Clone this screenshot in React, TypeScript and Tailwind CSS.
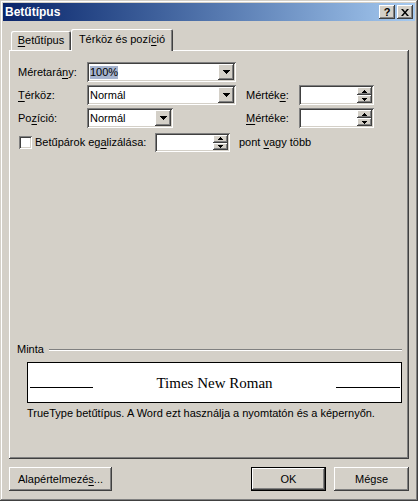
import React from "react";

const raised =
  "shadow-[inset_-1px_-1px_#404040,inset_1px_1px_#ffffff,inset_-2px_-2px_#808080,inset_2px_2px_#d4d0c8]";
const sunken =
  "shadow-[inset_1px_1px_#808080,inset_-1px_-1px_#ffffff,inset_2px_2px_#404040,inset_-2px_-2px_#d4d0c8]";

const U = ({ children }: { children: React.ReactNode }) => (
  <span className="underline underline-offset-[2px] decoration-1">{children}</span>
);

const DownArrow = () => (
  <svg width="7" height="4" viewBox="0 0 7 4">
    <path d="M0 0h7L3.5 4z" fill="#000" shapeRendering="crispEdges" />
  </svg>
);

const Combo = ({
  width,
  value,
  selected,
}: {
  width: string;
  value: string;
  selected?: boolean;
}) => (
  <div className={`${sunken} ${width} bg-white h-[20px] flex p-[2px]`}>
    <div className="flex-1 flex items-center pl-[1px]">
      <span className={selected ? "bg-[#a6b4cf] leading-[13px]" : "leading-[13px]"}>{value}</span>
    </div>
    <div className={`${raised} bg-[#d4d0c8] w-[16px] h-full flex items-center justify-center`}>
      <DownArrow />
    </div>
  </div>
);

const SpinArrow = ({ up }: { up?: boolean }) => (
  <svg width="5" height="3" viewBox="0 0 5 3">
    <path d={up ? "M2.5 0L5 3H0z" : "M0 0h5L2.5 3z"} fill="#000" shapeRendering="crispEdges" />
  </svg>
);

const Spin = ({ width, height }: { width: string; height: string }) => (
  <div className={`${sunken} ${width} ${height} bg-white flex p-[2px]`}>
    <div className="flex-1" />
    <div className="w-[15px] h-full flex flex-col">
      <div className={`${raised} bg-[#d4d0c8] flex-1 flex items-center justify-center`}>
        <SpinArrow up />
      </div>
      <div className={`${raised} bg-[#d4d0c8] flex-1 flex items-center justify-center`}>
        <SpinArrow />
      </div>
    </div>
  </div>
);

export default function App() {
  return (
    <div className="w-[418px] h-[501px] bg-[#d4d0c8] text-[11px] leading-[13px] text-black font-['Liberation_Sans',Arial,sans-serif] shadow-[inset_-1px_-1px_#404040,inset_1px_1px_#d4d0c8,inset_-2px_-2px_#808080,inset_2px_2px_#ffffff] p-[3px] flex flex-col">
      {/* Title bar */}
      <div className="h-[18px] shrink-0 bg-gradient-to-r from-[#0a246a] to-[#a6caf0] flex items-center pl-[2px] pr-[2px]">
        <span className="text-white font-bold text-[12px] flex-1">Betűtípus</span>
        <div className={`${raised} bg-[#d4d0c8] w-[16px] h-[14px] flex items-center justify-center font-bold text-[11px] leading-none`}>
          ?
        </div>
        <div className={`${raised} bg-[#d4d0c8] w-[16px] h-[14px] ml-[2px] flex items-center justify-center`}>
          <svg width="8" height="7" viewBox="0 0 8 7">
            <path d="M0 0h2l2 2.5L6 0h2L5 3.5 8 7H6L4 4.5 2 7H0l3-3.5z" fill="#000" />
          </svg>
        </div>
      </div>

      <div className="flex-1 px-[6px] flex flex-col">
        {/* Tabs */}
        <div className="mt-[8px] h-[21px] flex items-end pl-[2px]">
          <div className="h-[19px] w-[60px] rounded-t-[2px] shadow-[inset_1px_1px_#ffffff,inset_-1px_0_#404040,inset_-2px_0_#808080] flex items-center justify-center">
            <span>
              <U>B</U>etűtípus
            </span>
          </div>
          <div className="relative z-10 -mb-px h-[22px] w-[102px] bg-[#d4d0c8] rounded-t-[2px] shadow-[inset_1px_1px_#ffffff,inset_-1px_0_#404040,inset_-2px_0_#808080] flex items-center justify-center pb-[2px]">
            <span>
              Térköz és pozí<U>c</U>ió
            </span>
          </div>
        </div>

        {/* Panel */}
        <div className="h-[409px] shadow-[inset_-1px_-1px_#404040,inset_1px_1px_#ffffff,inset_-2px_-2px_#808080] flex flex-col">
          <div className="pl-[9px] pt-[12px] flex flex-col">
            <div className="h-[20px] flex items-center">
              <span className="w-[69px]">
                Méretará<U>n</U>y:
              </span>
              <Combo width="w-[149px]" value="100%" selected />
            </div>
            <div className="mt-[3px] h-[20px] flex items-center">
              <span className="w-[69px]">
                <U>T</U>érköz:
              </span>
              <Combo width="w-[149px]" value="Normál" />
              <span className="ml-[10px] w-[53px]">
                Mérték<U>e</U>:
              </span>
              <Spin width="w-[75px]" height="h-[20px]" />
            </div>
            <div className="mt-[3px] h-[20px] flex items-center">
              <span className="w-[69px]">
                Po<U>z</U>íció:
              </span>
              <Combo width="w-[86px]" value="Normál" />
              <span className="ml-[73px] w-[53px]">
                <U>M</U>értéke:
              </span>
              <Spin width="w-[75px]" height="h-[20px]" />
            </div>
            <div className="mt-[5px] h-[19px] flex items-center">
              <div className={`${sunken} ml-[1px] w-[13px] h-[13px] bg-white`} />
              <span className="ml-[3px] w-[120px]">
                Betűpárok eg<U>a</U>lizálása:
              </span>
              <Spin width="w-[75px]" height="h-[19px]" />
              <span className="ml-[9px]">
                pont <U>v</U>agy több
              </span>
            </div>
          </div>

          {/* Minta */}
          <div className="mt-[191px] pl-[8px] pr-[7px] flex flex-col">
            <div className="h-[13px] flex items-center">
              <span>Minta</span>
              <div className="ml-[5px] flex-1 h-[2px] border-t border-t-[#808080] border-b border-b-white" />
            </div>
            <div className="ml-[10px] mt-[6px] h-[41px] bg-white border border-black flex items-center justify-between pl-[2px] pr-[1px]">
              <div className="w-[63px] h-px bg-black mt-[10px]" />
              <span className="font-['Liberation_Serif','Times_New_Roman',serif] text-[15px] leading-[18px]">
                Times New Roman
              </span>
              <div className="w-[64px] h-px bg-black mt-[10px]" />
            </div>
            <div className="ml-[10px] mt-[4px]">
              TrueType betűtípus. A Word ezt használja a nyomtatón és a képernyőn.
            </div>
          </div>
        </div>

        {/* Buttons */}
        <div className="mt-[8px] h-[24px] flex">
          <div className={`${raised} w-[103px] h-full flex items-center justify-center`}>
            <span>
              Alapértelmezé<U>s</U>...
            </span>
          </div>
          <div className="ml-auto w-[75px] h-full border border-black">
            <div className={`${raised} w-full h-full flex items-center justify-center`}>OK</div>
          </div>
          <div className={`${raised} ml-[8px] w-[75px] h-full flex items-center justify-center`}>Mégse</div>
        </div>
      </div>
    </div>
  );
}
